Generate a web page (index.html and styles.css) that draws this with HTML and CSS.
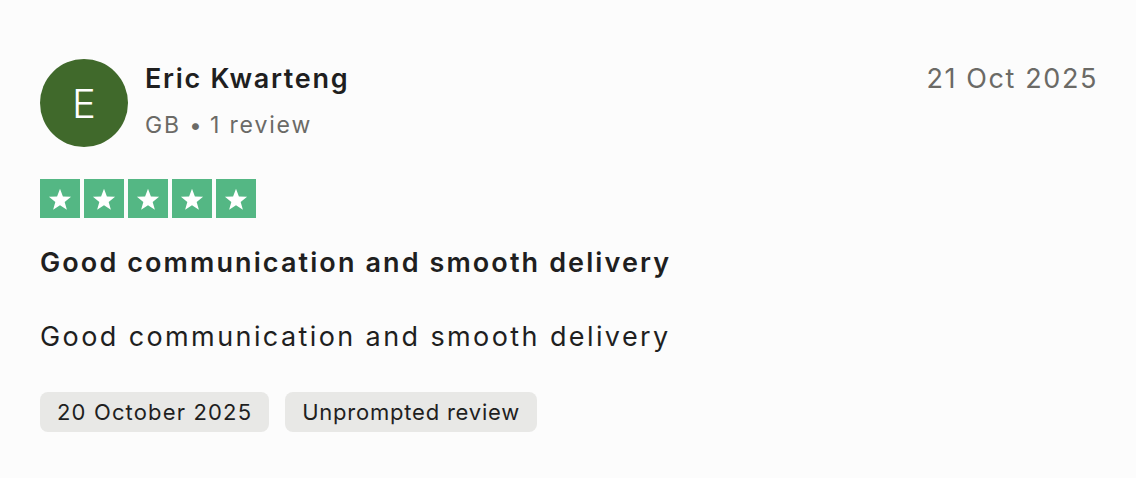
FILE: index.html
```
<!DOCTYPE html>
<html lang="en">
<head>
<meta charset="utf-8">
<title>Review</title>
<link rel="stylesheet" href="styles.css">
</head>
<body>
<article class="review">
  <header class="head">
    <div class="avatar">E</div>
    <div class="who">
      <div class="name">Eric Kwarteng</div>
      <div class="meta">GB <span class="dot">•</span> 1 review</div>
    </div>
    <time class="date">21 Oct 2025</time>
  </header>
  <div class="stars">
    <span class="star"><svg viewBox="0 0 24 24"><path d="M12 3.2l2.5 6.6 7 .3-5.5 4.4 1.9 6.8L12 17.4l-5.9 3.9 1.9-6.8-5.5-4.4 7-.3z"/></svg></span>
    <span class="star"><svg viewBox="0 0 24 24"><path d="M12 3.2l2.5 6.6 7 .3-5.5 4.4 1.9 6.8L12 17.4l-5.9 3.9 1.9-6.8-5.5-4.4 7-.3z"/></svg></span>
    <span class="star"><svg viewBox="0 0 24 24"><path d="M12 3.2l2.5 6.6 7 .3-5.5 4.4 1.9 6.8L12 17.4l-5.9 3.9 1.9-6.8-5.5-4.4 7-.3z"/></svg></span>
    <span class="star"><svg viewBox="0 0 24 24"><path d="M12 3.2l2.5 6.6 7 .3-5.5 4.4 1.9 6.8L12 17.4l-5.9 3.9 1.9-6.8-5.5-4.4 7-.3z"/></svg></span>
    <span class="star"><svg viewBox="0 0 24 24"><path d="M12 3.2l2.5 6.6 7 .3-5.5 4.4 1.9 6.8L12 17.4l-5.9 3.9 1.9-6.8-5.5-4.4 7-.3z"/></svg></span>
  </div>
  <h2 class="title">Good communication and smooth delivery</h2>
  <p class="body">Good communication and smooth delivery</p>
  <div class="tags">
    <span class="tag tag-date">20 October 2025</span>
    <span class="tag tag-kind">Unprompted review</span>
  </div>
</article>
</body>
</html>
```
FILE: styles.css
```
html, body {
  margin: 0;
  background: #fcfcfc;
}
body {
  font-family: Inter, "Noto Sans", sans-serif;
  color: #1f1f1f;
}
.review {
  padding: 59px 38px 0 40px;
}
.head {
  display: flex;
  align-items: flex-start;
}
.avatar {
  width: 88px;
  height: 88px;
  border-radius: 50%;
  background: #40692b;
  color: #fff;
  font-size: 40px;
  font-weight: 300;
  display: flex;
  align-items: center;
  justify-content: center;
  flex: none;
}
.who {
  margin-left: 17px;
  flex: 1;
}
.name {
  font-size: 27px;
  font-weight: 600;
  line-height: 36px;
  margin-top: 2px;
  letter-spacing: 1.7px;
}
.meta {
  font-size: 23px;
  color: #6b6a66;
  line-height: 30px;
  margin-top: 13px;
  letter-spacing: 1.85px;
}
.dot {
  font-size: 22px;
  letter-spacing: 0;
}
.date {
  font-size: 27px;
  color: #6b6a66;
  line-height: 36px;
  margin-top: 2px;
  letter-spacing: 1.6px;
}
.stars {
  display: flex;
  gap: 4px;
  margin-top: 32px;
}
.star {
  width: 40px;
  height: 39px;
  background: #54b784;
  display: flex;
  align-items: center;
  justify-content: center;
}
.star svg {
  width: 28px;
  height: 28px;
  fill: #fff;
}
.title {
  margin: 27px 0 0;
  font-size: 27px;
  font-weight: 600;
  line-height: 36px;
  letter-spacing: 2.1px;
}
.body {
  margin: 38px 0 0;
  font-size: 27px;
  line-height: 36px;
  letter-spacing: 2.4px;
}
.tags {
  display: flex;
  gap: 16px;
  margin-top: 37px;
}
.tag {
  background: #e8e8e6;
  border-radius: 8px;
  height: 40px;
  padding: 0 17px;
  display: flex;
  align-items: center;
  font-size: 22px;
}
.tag-date {
  letter-spacing: 1.15px;
}
.tag-kind {
  letter-spacing: 0.78px;
}
```
